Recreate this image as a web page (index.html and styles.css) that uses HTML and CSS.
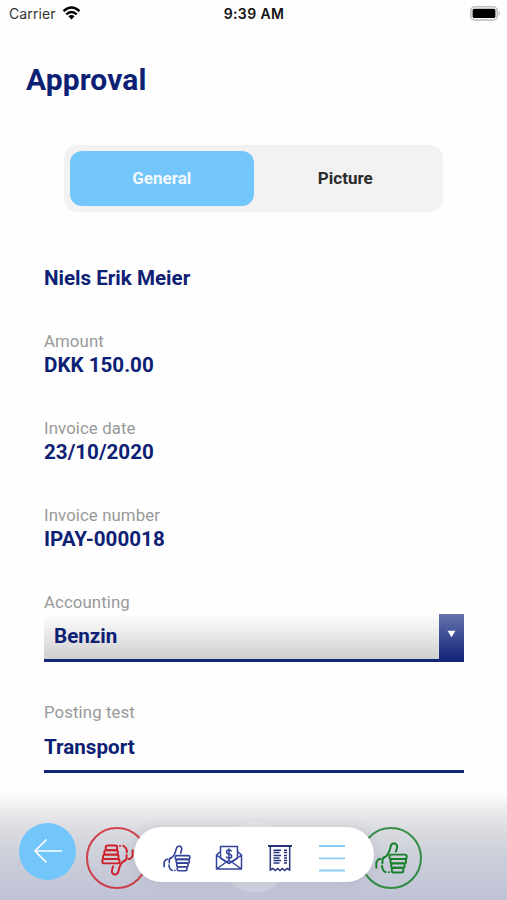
FILE: index.html
```html
<!DOCTYPE html>
<html lang="en">
<head>
<meta charset="utf-8">
<title>Approval</title>
<link rel="stylesheet" href="styles.css">
</head>
<body>
<svg class="defs" aria-hidden="true">
  <symbol id="thumb" viewBox="106 186 98 94">
    <g fill="none" stroke="currentColor" stroke-width="5.8" stroke-linecap="round" stroke-linejoin="round">
      <path d="M134 231C145 226 149 215 152 201C153 189 166 186 171 195C173 202 170 208 168 214"/>
      <rect x="149" y="223" width="51" height="13" rx="5"/>
      <rect x="152" y="236" width="46" height="13" rx="5"/>
      <rect x="154" y="249" width="40" height="13" rx="5"/>
      <rect x="156" y="262" width="34" height="14" rx="5"/>
      <path d="M134 231C125 233 129 240 128 248M127 256C127 266 131 272 138 275M147 275h1M122 236C114 234 114 241 110 246V262"/>
    </g>
  </symbol>
</svg>
<div class="screen">
  <header class="status">
    <div class="carrier">Carrier
      <svg class="wifi" viewBox="0 0 18 14"><g fill="none" stroke="#000" stroke-width="2.5"><path d="M1 5.1Q9 -2.2 17 5.1"/><path d="M3.8 8.4Q9 3.6 14.2 8.4"/></g><path d="M5.9 10.3Q9 7.7 12.1 10.3L9 13.5Z"/></svg>
    </div>
    <div class="time">9:39 AM</div>
    <svg class="battery" viewBox="0 0 31 15"><rect x=".8" y=".8" width="26.4" height="13.2" rx="4" fill="#fff" stroke="#bdbdbd" stroke-width="1.6"/><rect x="2.6" y="2.8" width="22.8" height="9.2" rx="1.6"/><path d="M28.6 5Q31 7.4 28.6 10Z" fill="#aaa"/></svg>
  </header>
  <h1>Approval</h1>
  <nav class="tabs"><div class="tab active">General</div><div class="tab">Picture</div></nav>
  <main>
    <div class="value name">Niels Erik Meier</div>
    <div class="field"><div class="label">Amount</div><div class="value">DKK 150.00</div></div>
    <div class="field"><div class="label">Invoice date</div><div class="value">23/10/2020</div></div>
    <div class="field"><div class="label">Invoice number</div><div class="value">IPAY-000018</div></div>
    <div class="field accounting"><div class="label">Accounting</div>
      <div class="select"><span class="value">Benzin</span><span class="drop"><svg viewBox="0 0 10 8"><path d="M.5 .5h9L5 7.5Z" fill="#fff"/></svg></span></div>
    </div>
    <div class="posting"><div class="label">Posting test</div><div class="value input">Transport</div></div>
  </main>
  <footer>
    <div class="back"><svg viewBox="0 0 30 26"><path d="M29 13H2M13.5 1.5L2 13L13.5 24.5" fill="none" stroke="#fff" stroke-width="1.7"/></svg></div>
    <div class="round reject"><svg><use href="#thumb"/></svg></div>
    <div class="pill">
      <svg class="like"><use href="#thumb"/></svg>
      <svg class="mail" viewBox="0 0 28 26"><g fill="none" stroke="#33439a" stroke-width="1.5" stroke-linejoin="round"><path d="M5.5 6.5L1.5 10V24H26.5V10L22.5 6.5M1.5 10L11 17M26.5 10L17 17M1.5 24L12 16.5Q14 15 16 16.5L26.5 24"/><path d="M5.5 13V1.5H22.5V13L14 18.5Z"/><path d="M16.7 6.5Q16 5 14 5Q11.5 5 11.5 7Q11.5 8.6 14 9Q16.7 9.5 16.7 11.3Q16.7 13.3 14 13.3Q11.8 13.3 11.3 11.5M14 3.5V15"/></g></svg>
      <svg class="receipt" viewBox="0 0 26 28"><g fill="none" stroke="#27357f"><path stroke-width="2" d="M1 2H25"/><path stroke-width="1.5" d="M3.3 2V26L5.8 24.5L8.2 26.5L10.6 24.5L13 26.5L15.4 24.5L17.8 26.5L20.2 24.5L22.7 26V2"/><path stroke-width="1.5" d="M6.5 6.2H14M6.5 8.6H12.5M6.5 11.6H14M6.5 14H12.5M6.5 16.6H14M6.5 19H12.5M17 6.2H20M17 8.6H20M17 11.6H20M17 14H20M17 16.6H20M17 19H20"/></g></svg>
      <svg class="menu" viewBox="0 0 26 28"><path d="M0 2H26M0 14.3H26M0 26.5H26" stroke="#8bcdf8" stroke-width="1.8"/></svg>
    </div>
    <div class="round approve"><svg><use href="#thumb"/></svg></div>
  </footer>
</div>
</body>
</html>
```
FILE: styles.css
```css
* { box-sizing: border-box; }
body { margin: 0; background: #fff; font-family: Roboto, sans-serif; }
svg { display: block; flex: none; }
.defs { position: absolute; width: 0; height: 0; }
.screen { width: 507px; height: 900px; display: flex; flex-direction: column; overflow: hidden; background: #fefefe; }
.status { height: 28px; flex: none; display: grid; grid-template-columns: 1fr auto 1fr; align-items: center; padding: 0 6px 2px 7px; font-family: Inter, sans-serif; }
.carrier { display: flex; align-items: center; gap: 6px; padding-left: 2px; font-size: 14px; letter-spacing: .1px; color: #333; }
.wifi { width: 19px; height: 14px; margin-top: -1px; }
.time { font-size: 14px; font-weight: 600; letter-spacing: .4px; color: #111; }
.battery { width: 31px; height: 15px; justify-self: end; }
h1 { margin: 32px 0 0 26px; height: 40px; line-height: 40px; font-size: 30px; letter-spacing: .1px; font-weight: 700; color: #0c2074; flex: none; }
.tabs { display: flex; flex: none; width: 379px; height: 67px; margin: 45px 0 0 64px; padding: 6px; border-radius: 13px; background: #f2f2f2; }
.tab { flex: 1; display: flex; align-items: center; justify-content: center; padding-bottom: 1px; font-size: 17px; font-weight: 700; color: #2b2b2b; }
.active { background: #72c6fa; color: #f3faff; border-radius: 12px; }
main { padding: 54px 43px 0 44px; flex: none; }
.label { height: 24px; line-height: 24px; font-size: 16.8px; color: #999; letter-spacing: .1px; }
.value { height: 25px; line-height: 25px; font-size: 20.6px; font-weight: 700; color: #0c2074; }
.name { margin-bottom: 38px; }
.field { margin-bottom: 38px; }
.select { display: flex; height: 48px; border-bottom: 3px solid #14267b; background: linear-gradient(#fefefe, #cfcfcf); }
.select .value { flex: 1; padding: 10px 0 0 10px; }
.drop { width: 25px; display: flex; align-items: center; justify-content: center; background: linear-gradient(#6672ae, #14267b); padding-bottom: 6px; }
.drop svg { width: 9px; height: 8px; }
.input { height: 49px; padding-top: 11px; border-bottom: 3px solid #14267b; }
footer { flex: none; height: 120px; margin-top: auto; padding-left: 19px; display: flex; align-items: flex-start; background: linear-gradient(#fefefe 10%, #ececed 25%, #dadbe0 42%, #ccced9 65%, #bec2d6); }
.back { width: 57px; height: 57px; margin-top: 43px; border-radius: 50%; background: #72c6fa; display: flex; align-items: center; justify-content: center; }
.back svg { width: 30px; height: 26px; margin-top: -1px; }
.round { flex: none; width: 62px; height: 62px; margin-top: 46.5px; border: 2px solid; border-radius: 50%; }
.round svg { width: 33px; height: 32px; }
.reject { margin-left: 9.5px; color: #ce2029; border-color: rgba(206, 32, 41, .82); }
.reject svg { margin: 15px 0 0 13px; transform: rotate(180deg); }
.pill { position: relative; z-index: 1; flex: none; width: 240px; height: 55px; margin: 47px 0 0 -13.5px; border-radius: 28px; background: #fff; box-shadow: 0 0 14px rgba(80, 80, 100, .15); display: flex; align-items: center; padding: 7px 0 0 29px; }
.pill::before { content: ""; position: absolute; z-index: -1; left: 87px; top: -6px; width: 68px; height: 72px; border-radius: 50%; background: linear-gradient(rgba(255, 255, 255, .18) 9%, #fff 9%, #fff 84.5%, rgba(255, 255, 255, .18) 84.5%); }
.like { width: 28px; height: 27px; color: #33439a; }
.mail { width: 28px; height: 26px; margin-left: 24px; }
.receipt { width: 26px; height: 28px; margin-left: 24px; }
.menu { width: 26px; height: 28px; margin-left: 26px; }
.approve { margin-left: -14px; color: #18802a; border-color: rgba(24, 128, 42, .85); }
.approve svg { margin: 13.5px 0 0 13px; }
```
